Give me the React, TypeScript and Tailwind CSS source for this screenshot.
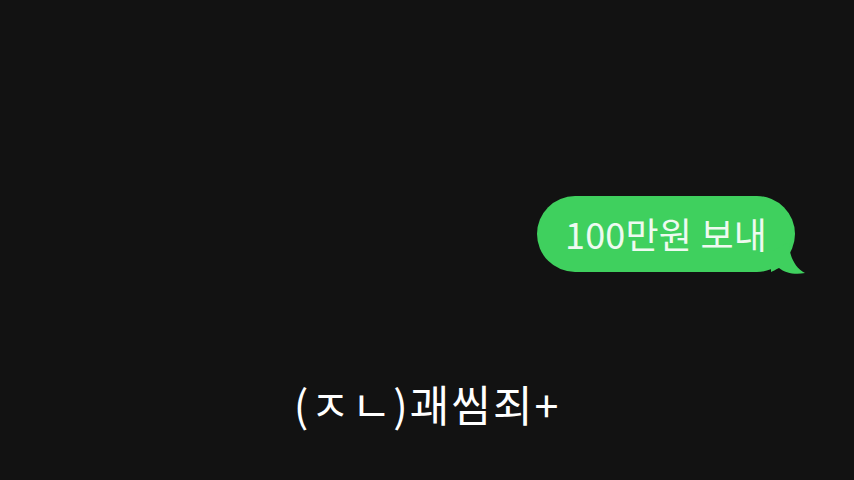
export default function App() {
  return (
    <div className="w-[854px] h-[480px] bg-[#121212] flex flex-col overflow-hidden">
      <div className="pt-[196px] pr-[59px] flex justify-end">
        <div className="relative h-[76px] w-[258px] rounded-[38px] bg-[#3fd05e] flex items-center justify-center">
          <span
            className="text-[36px] text-[#eefaf0] leading-none tracking-[0.2px] pb-[2px]"
            style={{ fontFamily: '"Noto Sans CJK KR", "Noto Sans", sans-serif' }}
          >
            100만원 보내
          </span>
          <svg
            className="absolute right-[-10px] bottom-[-4px]"
            width="34"
            height="34"
            viewBox="0 0 34 34"
          >
            <path
              d="M0 10 L18 0 C18 14 24 26 34 31 C24 33 14 31 8 26 C4 28 2 29 0 30 Z"
              fill="#3fd05e"
            />
          </svg>
        </div>
      </div>
      <div className="mt-[110px] flex justify-center">
        <span
          className="text-[43px] text-white leading-none tracking-[2px]"
          style={{ fontFamily: '"Noto Sans CJK KR", "Noto Sans", sans-serif' }}
        >
          (ㅈㄴ)괘씸죄+
        </span>
      </div>
    </div>
  );
}
